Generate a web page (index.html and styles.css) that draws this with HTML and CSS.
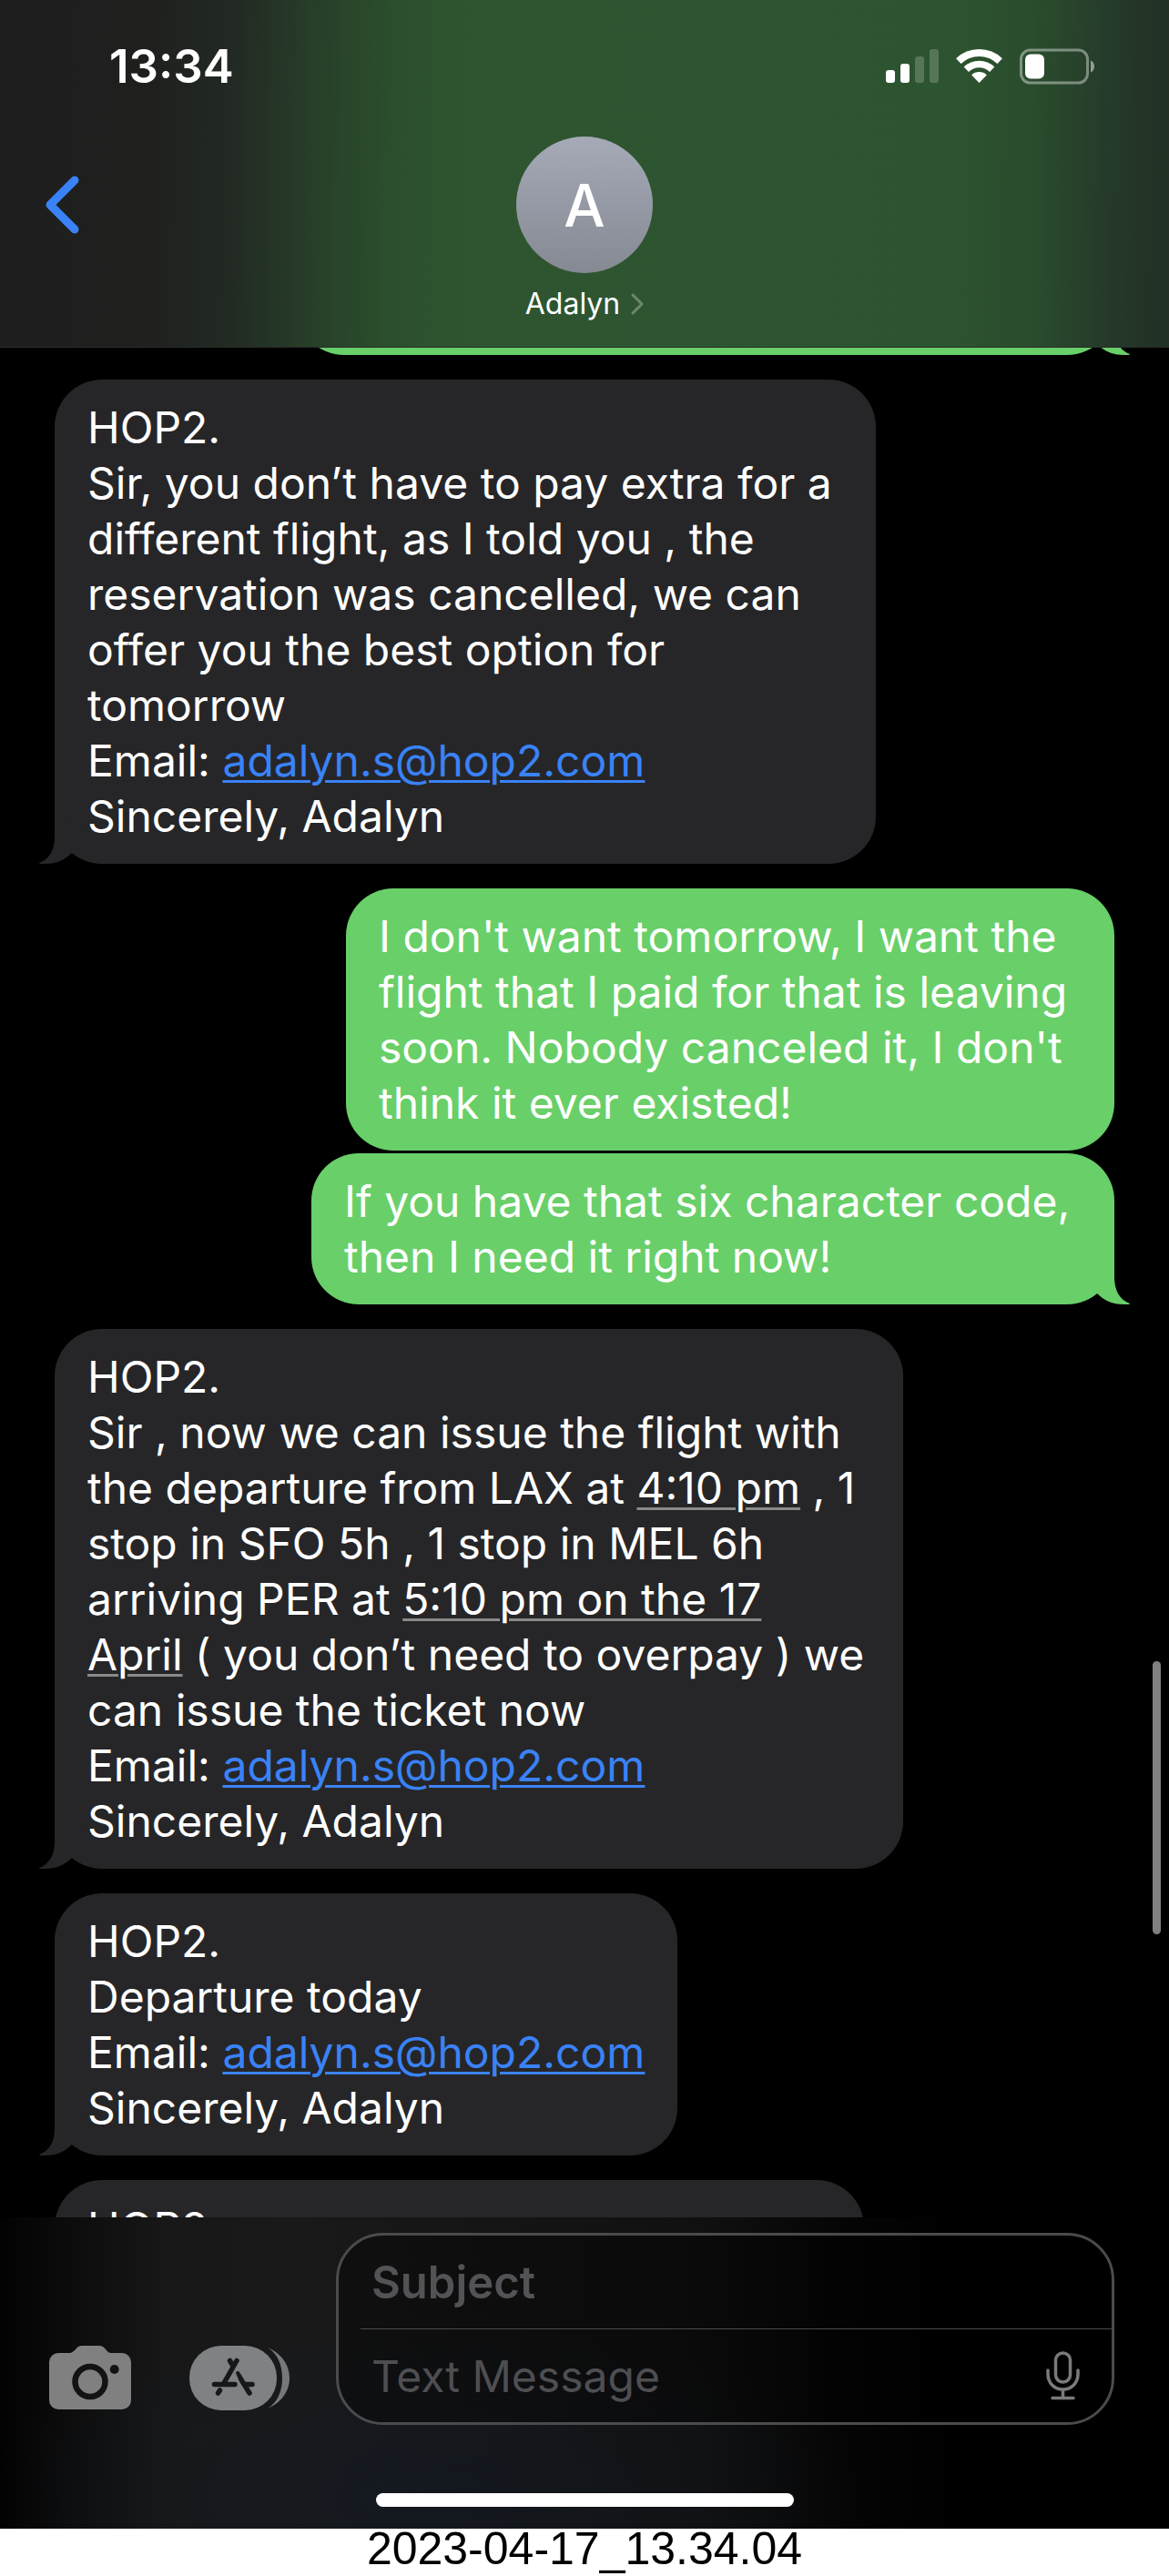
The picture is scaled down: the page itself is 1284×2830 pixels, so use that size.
FILE: index.html
```html
<!DOCTYPE html>
<html lang="en">
<head>
    <meta charset="UTF-8">
    <meta name="viewport" content="width=device-width, initial-scale=1.0">
    <title>Messages - Adalyn</title>
    <link rel="stylesheet" href="styles.css">
</head>
<body>
    <!-- Shared bubble tail -->
    <svg class="sprite" width="0" height="0" aria-hidden="true">
        <symbol id="tail" viewBox="-20 -60 60 60">
            <path d="M0 -54V-30C0 -15 -6 -5 -17 -1Q-17 0 -15 0H-10C2 0 11 -4 19 -12L40 -40Z"/>
        </symbol>
    </svg>

    <div class="phone">
        <header class="header">
            <div class="status-bar">
                <span class="time">13:34</span>
                <div class="status-icons">
                    <svg width="58" height="38" viewBox="0 0 58 38" fill="#fff" aria-hidden="true">
                        <rect x="0" y="23" width="10" height="14" rx="3"/>
                        <rect x="16" y="16" width="10" height="21" rx="3"/>
                        <rect x="32" y="8" width="10" height="29" rx="3" opacity="0.2"/>
                        <rect x="48" y="0" width="10" height="37" rx="3" opacity="0.2"/>
                    </svg>
                    <svg width="51" height="38" viewBox="0 0 51 38" aria-hidden="true">
                        <path d="M2.8 13.1A33 33 0 0 1 48.2 13.1" fill="none" stroke="#fff" stroke-width="8"/>
                        <path d="M11.3 22.3A20.5 20.5 0 0 1 39.7 22.3" fill="none" stroke="#fff" stroke-width="7.5"/>
                        <path d="M25.5 37L17.2 28.4A12 12 0 0 1 33.8 28.4Z" fill="#fff"/>
                    </svg>
                    <svg width="82" height="40" viewBox="0 0 82 40" aria-hidden="true">
                        <rect x="1.5" y="2" width="73" height="36" rx="10" fill="none" stroke="#fff" stroke-width="3" opacity="0.4"/>
                        <rect x="6" y="6.5" width="21" height="27" rx="6" fill="#fff"/>
                        <path d="M78 13.5C80.5 14.5 82 17 82 20S80.5 25.5 78 26.5Z" fill="#fff" opacity="0.5"/>
                    </svg>
                </div>
            </div>
            <div class="nav">
                <button class="back" type="button" aria-label="Back">
                    <svg width="38" height="64" viewBox="0 0 38 64" fill="none" stroke="#3a82f7" stroke-width="9" stroke-linecap="round" stroke-linejoin="round">
                        <path d="M33 5L6 32L33 59"/>
                    </svg>
                </button>
                <button class="contact" type="button">
                    <span class="avatar">A</span>
                    <span class="contact-name">Adalyn
                        <svg width="14" height="24" viewBox="0 0 14 24" fill="none" stroke="#fff" stroke-width="3" stroke-linecap="round" stroke-linejoin="round" opacity="0.3" aria-hidden="true">
                            <path d="M2 2L12 12L2 22"/>
                        </svg>
                    </span>
                </button>
            </div>
        </header>

        <main class="thread">
            <div class="bubble sent above">
                <svg class="tail" width="60" height="60" aria-hidden="true"><use href="#tail"/></svg>
            </div>

            <div class="bubble received medium">
                HOP2.<br>
                Sir, you don’t have to pay extra for a different flight, as I told you , the reservation was cancelled, we can offer you the best option for tomorrow<br>
                Email: <a class="email" href="mailto:adalyn.s@hop2.com">adalyn.s@hop2.com</a><br>
                Sincerely, Adalyn
                <svg class="tail" width="60" height="60" aria-hidden="true"><use href="#tail"/></svg>
            </div>

            <div class="bubble sent grouped">
                I don't want tomorrow, I want the flight that I paid for that is leaving soon. Nobody canceled it, I don't think it ever existed!
            </div>
            <div class="bubble sent wide">
                If you have that six character code, then I need it right now!
                <svg class="tail" width="60" height="60" aria-hidden="true"><use href="#tail"/></svg>
            </div>

            <div class="bubble received">
                HOP2.<br>
                Sir , now we can issue the flight with the departure from LAX at <a class="date" href="#">4:10 pm</a> , 1 stop in SFO 5h , 1 stop in MEL 6h arriving PER at <a class="date" href="#">5:10 pm on the 17<br>April</a> ( you don’t need to overpay ) we can issue the ticket now<br>
                Email: <a class="email" href="mailto:adalyn.s@hop2.com">adalyn.s@hop2.com</a><br>
                Sincerely, Adalyn
                <svg class="tail" width="60" height="60" aria-hidden="true"><use href="#tail"/></svg>
            </div>

            <div class="bubble received">
                HOP2.<br>
                Departure today<br>
                Email: <a class="email" href="mailto:adalyn.s@hop2.com">adalyn.s@hop2.com</a><br>
                Sincerely, Adalyn
                <svg class="tail" width="60" height="60" aria-hidden="true"><use href="#tail"/></svg>
            </div>

            <div class="bubble received below">HOP2.</div>

            <div class="scrollbar"></div>
        </main>

        <footer class="composer">
            <form class="composer-row">
                <button class="icon-btn" type="button" aria-label="Camera">
                    <svg width="90" height="71" viewBox="0 0 90 71">
                        <path fill="#808080" d="M10 8H22C25 8 27 6 29 4C31 1.5 33 0 36 0H55C58 0 60 1.5 62 4C64 6 65 8 68 8H80A10 10 0 0 1 90 18V60A10 10 0 0 1 80 70H10A10 10 0 0 1 0 60V18A10 10 0 0 1 10 8Z"/>
                        <circle cx="45" cy="39.5" r="16.5" fill="none" stroke="#131313" stroke-width="6.5"/>
                        <circle cx="71.7" cy="26" r="5" fill="#131313"/>
                    </svg>
                </button>
                <button class="icon-btn" type="button" aria-label="Apps">
                    <svg width="110" height="71" viewBox="0 0 110 71">
                        <rect width="96" height="71" rx="35" fill="#808183"/>
                        <path fill="#77787a" d="M86 2C100 8 110 20 110 35.5C110 51 100 63 86 69C97 62 102 50 102 35.5C102 21 97 9 86 2Z"/>
                        <g fill="none" stroke="#17181a" stroke-width="5.5" stroke-linecap="round">
                            <path d="M52 16.5L38 41M44.5 16.5L47.5 21.5M27.5 42.5H50M62 42.5H69M53 31L66 52M33.5 49L31.5 52"/>
                        </g>
                        <path d="M50 29L56.5 46" stroke="#808183" stroke-width="1.5"/>
                    </svg>
                </button>
                <div class="field">
                    <input class="subject" type="text" placeholder="Subject" aria-label="Subject">
                    <div class="message-row">
                        <input class="message" type="text" placeholder="Text Message" aria-label="Text Message">
                        <button class="mic" type="button" aria-label="Dictate">
                            <svg width="37" height="54" viewBox="0 0 37 54" fill="none" stroke="#7a7a7a" stroke-width="3.5" stroke-linecap="round">
                                <rect x="10.5" y="2" width="16" height="32" rx="8"/>
                                <path d="M2 21V25C2 35 9 42 18.5 42S35 35 35 25V21M18.5 42V51M7 51.5H30"/>
                            </svg>
                        </button>
                    </div>
                </div>
            </form>
            <div class="home-bar"></div>
        </footer>

        <p class="caption">2023-04-17_13.34.04</p>
    </div>
</body>
</html>
```

FILE: styles.css
```css
* {
    box-sizing: border-box;
}

body {
    margin: 0;
    background-color: #000;
    color: #fff;
    font-family: Inter, 'Liberation Sans', sans-serif;
    font-size: 48px;
    line-height: 61px;
}

button {
    padding: 0;
    border: none;
    background: none;
    color: inherit;
    font: inherit;
    cursor: pointer;
}

svg {
    display: block;
    flex-shrink: 0;
}

.sprite {
    position: absolute;
}

.phone {
    display: flex;
    flex-direction: column;
    height: 100vh;
}

/* Header */
.header {
    flex-shrink: 0;
    height: 382px;
    padding-top: 42px;
    border-bottom: 1px solid #2b2b2b;
    background: linear-gradient(91deg, #1e1e1e 0%, #1f201e 13%, #222a23 20%, #273f29 27%, #2c502d 34%, #2e5530 42%, #2d5430 80%, #2a4d2d 88%, #25392a 95%, #222f24 100%);
}

.status-bar {
    display: flex;
    justify-content: space-between;
    align-items: center;
    padding: 0 82px 0 120px;
}

.time {
    font-size: 51px;
    font-weight: 600;
}

.status-icons {
    display: flex;
    align-items: center;
    gap: 19px;
}

.nav {
    display: grid;
    grid-template-columns: 1fr auto 1fr;
    padding: 47px 49px 0;
}

.back {
    display: flex;
    align-items: center;
    justify-self: start;
    height: 150px;
}

.contact {
    display: flex;
    flex-direction: column;
    align-items: center;
    gap: 12px;
}

.avatar {
    display: flex;
    justify-content: center;
    align-items: center;
    width: 150px;
    height: 150px;
    border-radius: 50%;
    background: linear-gradient(#a6aab8, #858992);
    font-size: 64px;
    font-weight: 500;
}

.contact-name {
    display: flex;
    align-items: center;
    gap: 12px;
    font-size: 32px;
    line-height: 44px;
}

/* Conversation */
.thread {
    position: relative;
    display: flex;
    flex-direction: column;
    align-items: flex-start;
    flex: 1;
    min-height: 0;
    padding: 0 60px;
    overflow: hidden;
}

.bubble {
    position: relative;
    flex-shrink: 0;
    max-width: 932px;
    margin-bottom: 27px;
    padding: 22px 36px;
    border-radius: 52px;
}

.received {
    background-color: #262628;
    fill: #262628;
}

.sent {
    align-self: flex-end;
    max-width: 844px;
    background-color: #69cf69;
    fill: #69cf69;
}

.medium {
    max-width: 902px;
}

.sent.wide {
    max-width: 882px;
}

.grouped {
    margin-bottom: 3px;
}

/* Messages that continue under the header and the composer */
.sent.above {
    width: 100%;
    max-width: 898px;
    height: 166px;
    margin-top: -158px;
}

.below {
    width: 889px;
    height: 166px;
}

.tail {
    position: absolute;
    bottom: 0;
    left: -20px;
}

.sent .tail {
    right: -20px;
    left: auto;
    transform: scaleX(-1);
}

.bubble a {
    text-decoration-thickness: 3px;
    text-underline-offset: 4px;
}

.email {
    color: #3a82f7;
}

.date {
    color: #fff;
    text-decoration-color: #8a8a8a;
}

.scrollbar {
    position: absolute;
    right: 9px;
    bottom: 311px;
    width: 9px;
    height: 300px;
    border-radius: 5px;
    background-color: #808080;
}

/* Composer */
.composer {
    flex-shrink: 0;
    padding: 17px 0 24px;
    background:
        radial-gradient(ellipse 38% 60% at 36% 90%, rgba(18, 26, 38, 0.6), rgba(18, 26, 38, 0)),
        linear-gradient(90deg, #020202 0%, #0c0c0c 6%, #171717 14%, #191919 25%, #141414 45%, #101010 60%, #050505 72%, #000 82%);
}

.composer-row {
    display: flex;
    align-items: flex-end;
    margin: 0;
    padding: 0 60px 0 54px;
}

.icon-btn {
    margin: 0 64px 16px 0;
}

.icon-btn + .icon-btn {
    margin-right: 51px;
}

.field {
    flex: 1;
    min-width: 0;
    padding-left: 24px;
    border: 3px solid #4b4b4e;
    border-radius: 52px;
    background-color: rgba(0, 0, 0, 0.35);
}

.field input {
    display: block;
    width: 100%;
    min-width: 0;
    height: 102px;
    padding: 0 12px;
    border: none;
    outline: none;
    background: none;
    color: #fff;
    font: inherit;
}

.field input::placeholder {
    color: #4e4e52;
    opacity: 1;
}

.field .subject {
    height: 103px;
    border-bottom: 1px solid #4b4b4e;
    font-size: 49px;
    font-weight: 600;
}

.field .subject::placeholder {
    color: #535357;
}

.message-row {
    display: flex;
    align-items: center;
    padding-right: 35px;
}

.home-bar {
    width: 459px;
    height: 15px;
    margin: 75px auto 0;
    border-radius: 8px;
    background-color: #fff;
}

.caption {
    flex-shrink: 0;
    height: 52px;
    margin: 0;
    background-color: #fff;
    color: #000;
    font-family: 'Liberation Sans', Arial, sans-serif;
    font-size: 50px;
    line-height: 44px;
    text-align: center;
}
```
